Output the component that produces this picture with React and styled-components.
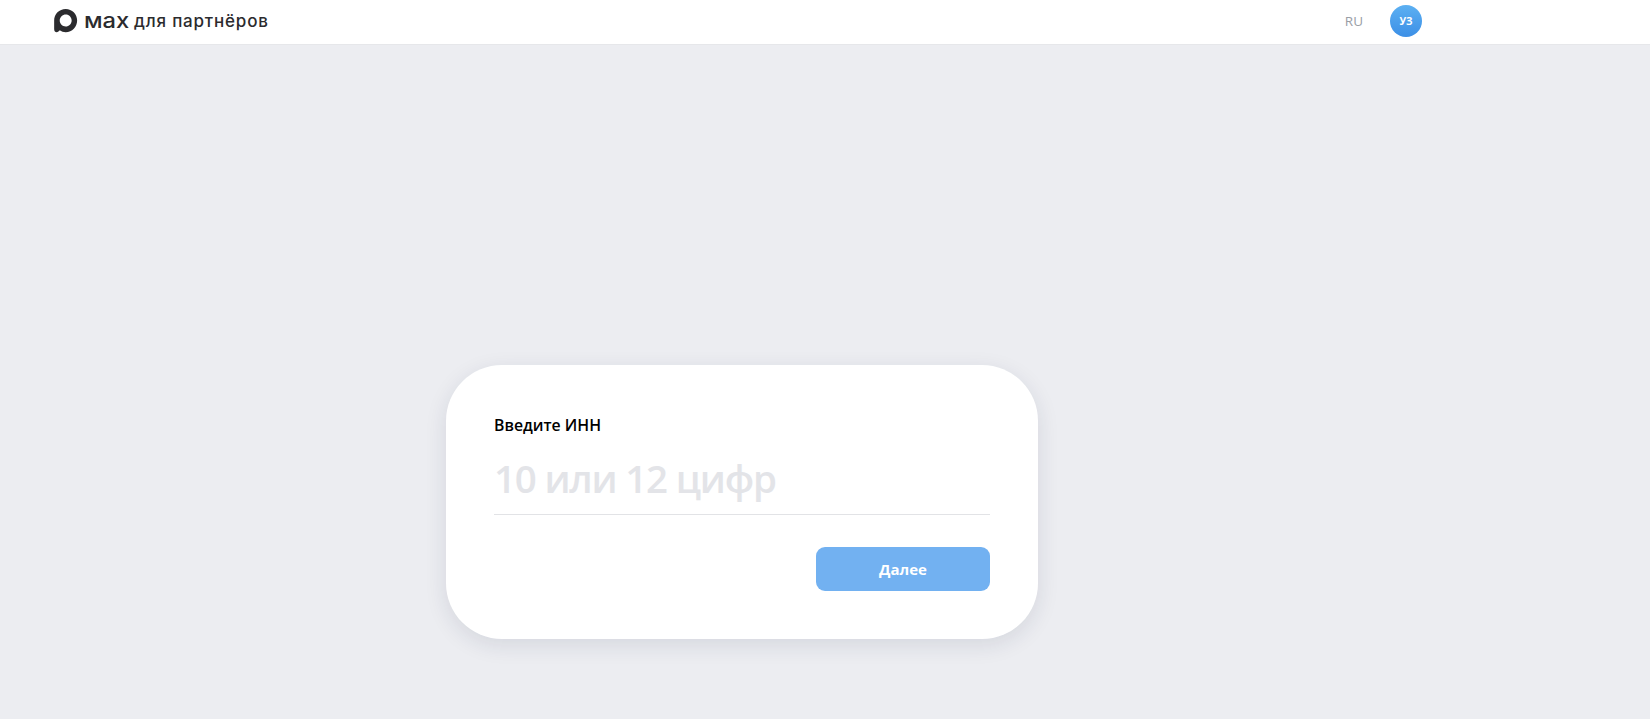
import React from "react";
import styled, { createGlobalStyle } from "styled-components";

const Global = createGlobalStyle`
  html, body { margin: 0; padding: 0; height: 100%; background: #ecedf1; overflow: hidden; }
  #root { height: 100%; }
  * { box-sizing: border-box; }
`;

const Page = styled.div`
  height: 719px;
  display: flex;
  flex-direction: column;
  background: #ecedf1;
  font-family: "Open Sans", "Noto Sans", sans-serif;
`;

const Header = styled.header`
  height: 45px;
  flex: none;
  display: flex;
  align-items: center;
  padding: 0 228px 3px 53px;
  background: #fff;
  border-bottom: 1px solid #e6e7ea;
`;

const Brand = styled.div`
  display: flex;
  align-items: center;
  color: #2b2b2e;
  white-space: nowrap;
`;

const BrandName = styled.span`
  display: inline-block;
  width: 43px;
  margin-left: 6px;
  font-family: Inter, sans-serif;
  font-size: 21px;
  font-weight: 500;
  line-height: 20px;
  transform: scaleX(1.13);
  transform-origin: left center;
`;

const BrandTail = styled.span`
  margin-left: 7px;
  font-family: Inter, sans-serif;
  font-size: 17px;
  font-weight: 500;
  letter-spacing: 0.8px;
  line-height: 20px;
`;

const Spacer = styled.div`
  flex: 1;
`;

const Lang = styled.span`
  font-size: 13.5px;
  font-weight: 500;
  color: #9a9ea6;
  margin-right: 27px;
`;

const Avatar = styled.div`
  width: 32px;
  height: 32px;
  border-radius: 50%;
  display: flex;
  align-items: center;
  justify-content: center;
  background: linear-gradient(180deg, #5cb0f2 0%, #3c8fe6 100%);
  color: #fff;
  font-size: 10px;
  font-weight: 700;
`;

const Main = styled.main`
  flex: 1;
  padding: 320px 0 0 446px;
`;

const Card = styled.section`
  width: 592px;
  height: 274px;
  padding: 50px 48px 48px;
  background: #fff;
  border-radius: 56px;
  display: flex;
  flex-direction: column;
  box-shadow: 0 6px 22px rgba(30, 40, 70, 0.11);
`;

const Label = styled.label`
  font-size: 15.8px;
  font-weight: 600;
  line-height: 20px;
  color: #000;
  height: 20px;
`;

const InputRow = styled.div`
  margin-top: 14px;
  height: 66px;
  padding-bottom: 7px;
  border-bottom: 1px solid #e2e3e6;
  display: flex;
  align-items: center;
`;

const Placeholder = styled.span`
  font-size: 38.5px;
  font-weight: 600;
  line-height: 46px;
  letter-spacing: -1.2px;
  color: #e3e4e8;
`;

const Actions = styled.div`
  margin-top: 32px;
  display: flex;
  justify-content: flex-end;
`;

const NextButton = styled.button`
  width: 174px;
  height: 44px;
  border: 0;
  border-radius: 9px;
  background: #72b1f1;
  color: #fff;
  font-family: inherit;
  font-size: 15px;
  font-weight: 700;
`;

const Logo = () => (
  <svg width="25" height="25" viewBox="0 0 26 26" aria-hidden="true">
    <path
      fill="#2b2b2e"
      fillRule="evenodd"
      d="M13.2 1C6.5 1 1.2 6.2 1.2 13v8.800c0 2.400 1.200 3.400 2.600 3.400 1.400 0 2.300-.9 3.200-2 1.800 1.300 3.800 2 6.200 2 6.700 0 11.900-5.400 11.900-12.100C25.100 6.300 19.800 1 13.200 1zm.1 5.800c3.400 0 6.100 2.800 6.100 6.200 0 3.500-2.800 6.300-6.200 6.300-3.400 0-6.200-2.800-6.200-6.200 0-3.500 2.900-6.300 6.300-6.300z"
    />
  </svg>
);

export default function App() {
  return (
    <Page>
      <Global />
      <Header>
        <Brand>
          <Logo />
          <BrandName>мах</BrandName>
          <BrandTail>для партнёров</BrandTail>
        </Brand>
        <Spacer />
        <Lang>RU</Lang>
        <Avatar>УЗ</Avatar>
      </Header>
      <Main>
        <Card>
          <Label>Введите ИНН</Label>
          <InputRow>
            <Placeholder>10 или 12 цифр</Placeholder>
          </InputRow>
          <Actions>
            <NextButton>Далее</NextButton>
          </Actions>
        </Card>
      </Main>
    </Page>
  );
}
